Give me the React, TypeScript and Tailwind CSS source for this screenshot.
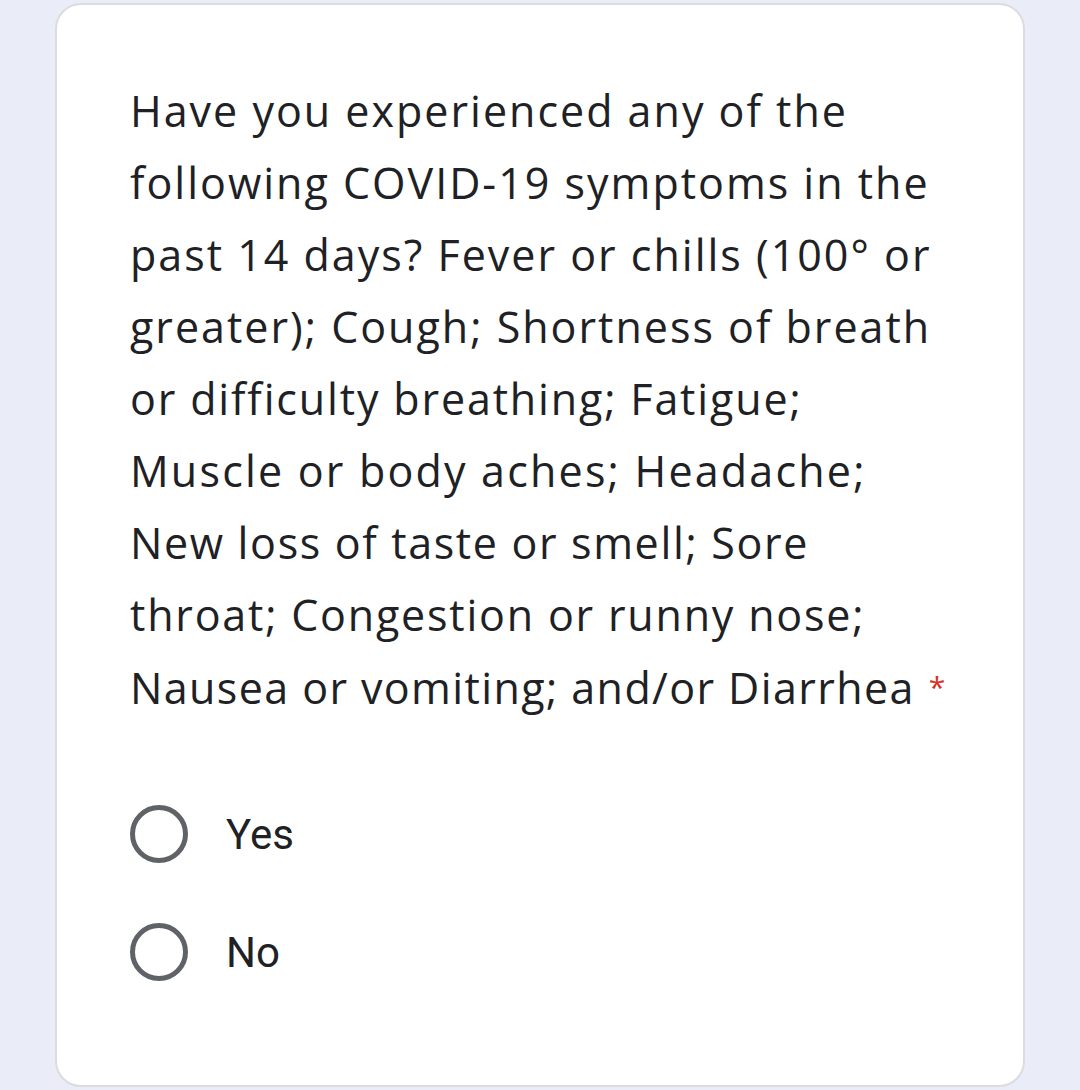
import React from "react";

const lines: { t: string; c: string }[] = [
  { t: "Have you experienced any of the", c: "" },
  { t: "following COVID-19 symptoms in the", c: "" },
  { t: "past 14 days? Fever or chills (100° or", c: "" },
  { t: "greater); Cough; Shortness of breath", c: "" },
  { t: "or difficulty breathing; Fatigue;", c: "tracking-[1.85px]" },
  { t: "Muscle or body aches; Headache;", c: "tracking-[2.2px]" },
  { t: "New loss of taste or smell; Sore", c: "tracking-[1.65px]" },
  { t: "throat; Congestion or runny nose;", c: "tracking-[1.8px]" },
];

function Radio({ label }: { label: string }) {
  return (
    <div className="flex items-center h-[118px]">
      <div className="w-[58px] h-[58px] rounded-full border-[5px] border-[#5f6368] shrink-0" />
      <span className="ml-[38px] text-[42px] text-[#202124]" style={{ fontFamily: "Roboto, sans-serif" }}>
        {label}
      </span>
    </div>
  );
}

export default function App() {
  return (
    <div className="w-[1080px] h-[1090px] bg-[#eaedf7] pt-[3px] pl-[55px]">
      <div className="w-[970px] h-[1084px] bg-white border-2 border-[#dadce0] rounded-[26px] pl-[73px] pt-[70px]">
        <div
          className="text-[43px] leading-[72px] tracking-[2px] text-[#202124] whitespace-nowrap"
          style={{ fontFamily: "'Open Sans', sans-serif" }}
        >
          {lines.map((l) => (
            <div key={l.t} className={l.c}>
              {l.t}
            </div>
          ))}
          <div className="tracking-[1.4px]">
            Nausea or vomiting; and/or Diarrhea
            <span className="text-[#d93025] text-[30px] ml-[14px] align-[6px]">*</span>
          </div>
        </div>
        <div className="mt-[51px]">
          <Radio label="Yes" />
          <Radio label="No" />
        </div>
      </div>
    </div>
  );
}
